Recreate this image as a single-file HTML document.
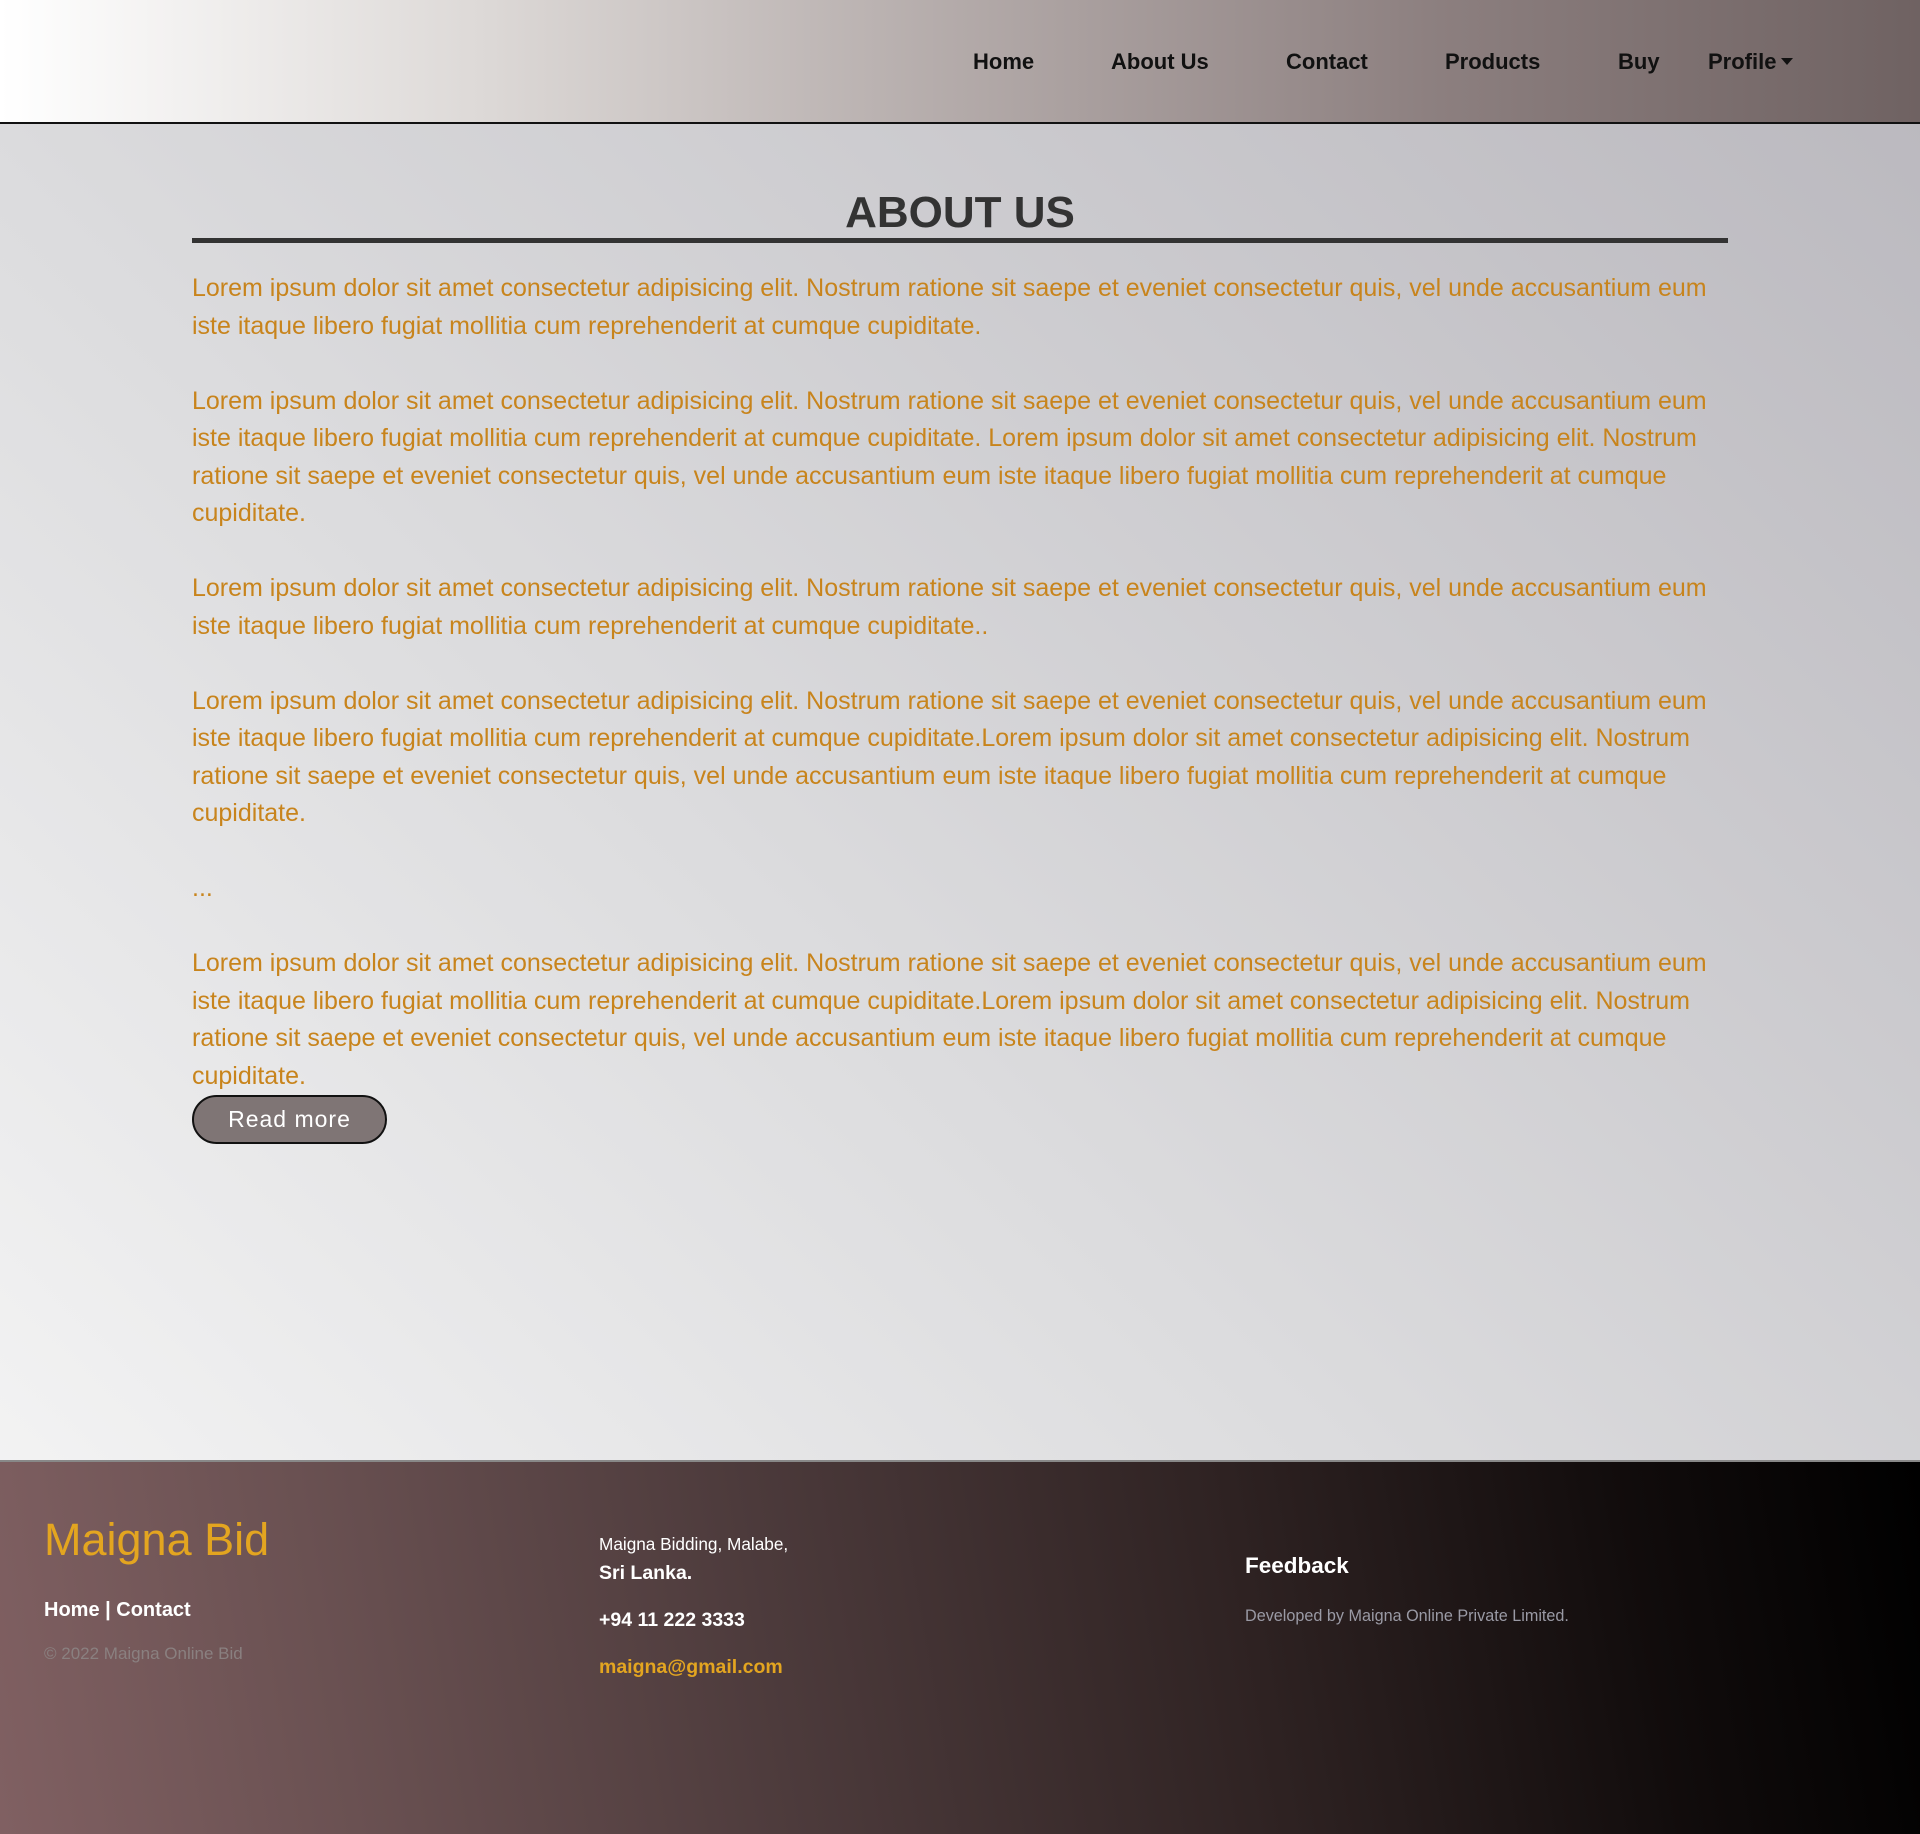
<!DOCTYPE html>
<html><head><meta charset="utf-8"><style>
*{margin:0;padding:0;box-sizing:border-box}
html,body{width:1920px;height:1834px;overflow:hidden}
body{font-family:"Liberation Sans",Arial,sans-serif;position:relative;background:linear-gradient(to top right,#f9f9f9 0%,#dcdcde 45%,#b9b7bd 100%)}
header{position:absolute;left:0;top:0;width:1920px;height:124px;background:linear-gradient(to right,#fff 0%,#ddd9d7 25%,#b3aaa9 50%,#8c7f7f 75%,#6f6262 100%);border-bottom:2px solid #111}
.nav a{position:absolute;top:49px;font-size:22px;font-weight:bold;color:#111;text-decoration:none;line-height:26px}
.tri{display:inline-block;width:0;height:0;border-left:6px solid transparent;border-right:6px solid transparent;border-top:7px solid #111;margin-left:5px;vertical-align:4px}
h1{position:absolute;left:0;width:1920px;text-align:center;top:187px;font-size:44px;line-height:52px;color:#333;font-weight:bold}
.hr{position:absolute;left:192px;width:1536px;top:238px;height:5px;background:#333}
.content{position:absolute;left:192px;top:270px;width:1540px;font-size:25px;line-height:37.5px;color:#c8841c}
.content p{margin-bottom:37.5px}
.content p.last{margin-bottom:0}
.btn{position:absolute;left:192px;top:1095px;width:195px;height:49px;border-radius:25px;background:#7f7575;border:2px solid #111;color:#fff;font-size:23px;letter-spacing:1px;text-align:center;line-height:45px}
footer{position:absolute;left:0;top:1460px;width:1920px;height:374px;background:linear-gradient(80deg,#806062 0%,#6a5152 18%,#4d3b3c 40%,#2e2222 65%,#110c0c 85%,#000 100%);border-top:2px solid #888}
footer div{position:absolute;white-space:nowrap}
</style></head><body>
<header><div class="nav">
<a style="left:973px">Home</a>
<a style="left:1111px">About Us</a>
<a style="left:1286px">Contact</a>
<a style="left:1445px">Products</a>
<a style="left:1618px">Buy</a>
<a style="left:1708px">Profile<span class="tri"></span></a>
</div></header>
<h1>ABOUT US</h1>
<div class="hr"></div>
<div class="content">
<p>Lorem ipsum dolor sit amet consectetur adipisicing elit. Nostrum ratione sit saepe et eveniet consectetur quis, vel unde accusantium eum iste itaque libero fugiat mollitia cum reprehenderit at cumque cupiditate.</p>
<p>Lorem ipsum dolor sit amet consectetur adipisicing elit. Nostrum ratione sit saepe et eveniet consectetur quis, vel unde accusantium eum iste itaque libero fugiat mollitia cum reprehenderit at cumque cupiditate. Lorem ipsum dolor sit amet consectetur adipisicing elit. Nostrum ratione sit saepe et eveniet consectetur quis, vel unde accusantium eum iste itaque libero fugiat mollitia cum reprehenderit at cumque cupiditate.</p>
<p>Lorem ipsum dolor sit amet consectetur adipisicing elit. Nostrum ratione sit saepe et eveniet consectetur quis, vel unde accusantium eum iste itaque libero fugiat mollitia cum reprehenderit at cumque cupiditate..</p>
<p>Lorem ipsum dolor sit amet consectetur adipisicing elit. Nostrum ratione sit saepe et eveniet consectetur quis, vel unde accusantium eum iste itaque libero fugiat mollitia cum reprehenderit at cumque cupiditate.Lorem ipsum dolor sit amet consectetur adipisicing elit. Nostrum ratione sit saepe et eveniet consectetur quis, vel unde accusantium eum iste itaque libero fugiat mollitia cum reprehenderit at cumque cupiditate.</p>
<p>...</p>
<p class="last">Lorem ipsum dolor sit amet consectetur adipisicing elit. Nostrum ratione sit saepe et eveniet consectetur quis, vel unde accusantium eum iste itaque libero fugiat mollitia cum reprehenderit at cumque cupiditate.Lorem ipsum dolor sit amet consectetur adipisicing elit. Nostrum ratione sit saepe et eveniet consectetur quis, vel unde accusantium eum iste itaque libero fugiat mollitia cum reprehenderit at cumque cupiditate.</p>
</div>
<div class="btn">Read more</div>
<footer>
<div style="left:44px;top:52px;font-size:45px;color:#e3a520">Maigna Bid</div>
<div style="left:44px;top:137px;font-size:20px;font-weight:bold;color:#fff">Home | Contact</div>
<div style="left:44px;top:182px;font-size:17px;color:#8a8080">© 2022 Maigna Online Bid</div>
<div style="left:599px;top:72px;font-size:17.2px;color:#fff">Maigna Bidding, Malabe,</div>
<div style="left:599px;top:100px;font-size:19.5px;font-weight:bold;color:#fff">Sri Lanka.</div>
<div style="left:599px;top:147px;font-size:19.5px;font-weight:bold;color:#fff">+94 11 222 3333</div>
<div style="left:599px;top:194px;font-size:19.5px;font-weight:bold;color:#e3a520">maigna@gmail.com</div>
<div style="left:1245px;top:91px;font-size:22.5px;font-weight:bold;color:#fff">Feedback</div>
<div style="left:1245px;top:145px;font-size:16.2px;color:#9a9aa5">Developed by Maigna Online Private Limited.</div>
</footer>
</body></html>
